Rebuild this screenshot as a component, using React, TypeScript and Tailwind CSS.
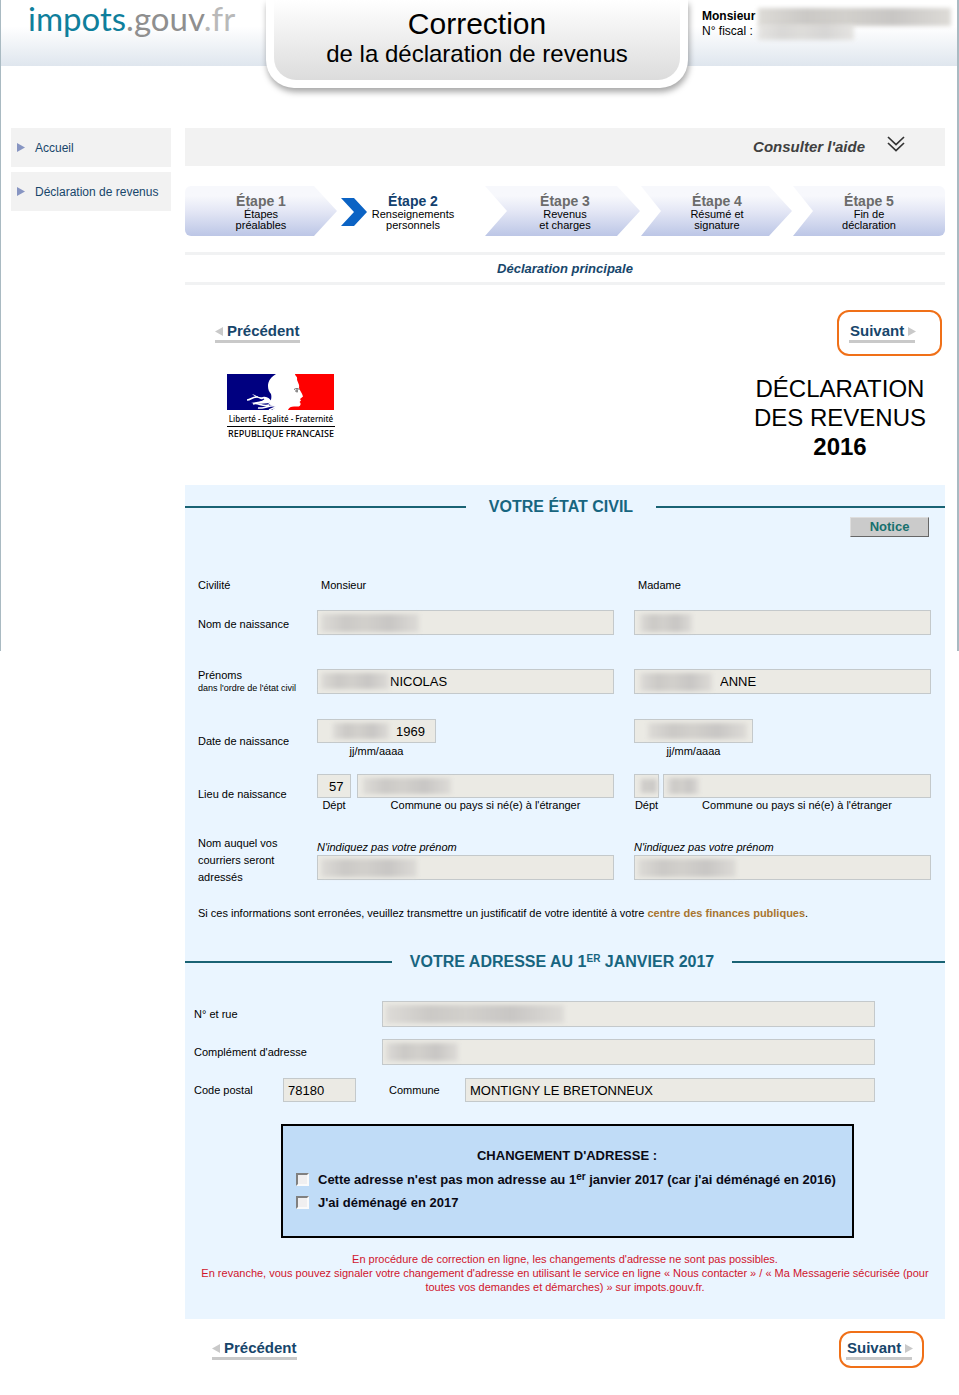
import React from "react";

type FieldProps = {
  label: string;
  id?: string;
  value?: string;
  className?: string;
  wrap?: string;
  smudge?: string;
};

const smudgeBase =
  "pointer-events-none absolute bg-[linear-gradient(90deg,#dddbd7,#cbc9c6_25%,#d2d0cc_45%,#c8c6c4_70%,#dddbd7)] blur-[2px]";

function Field({ label, id, value = "", className = "h-[25px]", wrap = "", smudge }: FieldProps) {
  return (
    <span className={`relative block ${wrap}`}>
      <input
        id={id}
        aria-label={label}
        readOnly
        value={value}
        className={`block w-full border border-[#c4c9cb] bg-[#ebeae4] px-1 text-[13px] text-black outline-none ${className}`}
      />
      {smudge && <span aria-hidden className={`${smudgeBase} ${smudge}`} />}
    </span>
  );
}

function Heading({ children, gap }: { children: React.ReactNode; gap: string }) {
  return (
    <div className={`flex h-5 items-center ${gap}`}>
      <span className="h-0.5 flex-[35] bg-[#1a6374]" />
      <h2 className="text-base leading-5 font-bold text-[#176580]">{children}</h2>
      <span className="h-0.5 flex-[36] bg-[#1a6374]" />
    </div>
  );
}

function Previous() {
  return (
    <a href="#precedent" className="flex h-5 items-center gap-1 border-b-3 border-[#c9c9c9] text-[15px] font-bold text-[#17466b]">
      <svg width="8" height="9" viewBox="0 0 8 9" aria-hidden>
        <path d="M8 0v9L0 4.5z" fill="#c9c9c9" />
      </svg>
      Précédent
    </a>
  );
}

function Next() {
  return (
    <a href="#suivant" className="flex h-5 items-center gap-1 border-b-3 border-[#c9c9c9] pl-px text-[15px] font-bold text-[#17466b]">
      Suivant
      <svg width="8" height="9" viewBox="0 0 8 9" className="shrink-0" aria-hidden>
        <path d="M0 0v9l8-4.5z" fill="#c9c9c9" />
      </svg>
    </a>
  );
}

const steps = [
  {
    n: 1,
    lines: ["Étapes", "préalables"],
    shape: "left-0 right-0 rounded-l-md [clip-path:polygon(0_0,calc(100%_-_23px)_0,100%_50%,calc(100%_-_23px)_100%,0_100%)]",
  },
  { n: 2, lines: ["Renseignements", "personnels"], shape: "" },
  {
    n: 3,
    lines: ["Revenus", "et charges"],
    shape: "-left-1 right-px [clip-path:polygon(0_0,calc(100%_-_23px)_0,100%_50%,calc(100%_-_23px)_100%,0_100%,22px_50%)]",
  },
  {
    n: 4,
    lines: ["Résumé et", "signature"],
    shape: "left-0 right-px [clip-path:polygon(0_0,calc(100%_-_23px)_0,100%_50%,calc(100%_-_23px)_100%,0_100%,20px_50%)]",
  },
  {
    n: 5,
    lines: ["Fin de", "déclaration"],
    shape: "left-0 right-0 rounded-r-md [clip-path:polygon(0_0,100%_0,100%_100%,0_100%,20px_50%)]",
  },
];

function Row({ label, className = "", labelClass = "", children }: { label: React.ReactNode; className?: string; labelClass?: string; children: React.ReactNode }) {
  return (
    <div className={`flex items-start pr-3.5 pl-[13px] ${className}`}>
      <div className={`w-[119px] shrink-0 leading-4 ${labelClass}`}>{label}</div>
      <div className="grid flex-1 grid-cols-2 gap-5">{children}</div>
    </div>
  );
}

function Marianne() {
  return (
    <div className="w-[108px] text-center font-['Noto_Sans',sans-serif] font-medium whitespace-nowrap text-black">
      <svg width="107" height="36" viewBox="0 0 107 36" className="block" role="img" aria-label="Drapeau tricolore et Marianne">
        <path d="M0 0H49C44 3 41 7 41 12C41 15 42 18 44 20C45 24 44 28 41 30L49 33L45 36H0Z" fill="#000080" />
        <path d="M68 0H107V36H61C62 33 65 32 69 32.500C72 33 74 32 73.500 29L72.500 28L74 26.500L73 25L76 22.500C75 19 73 17 72 14C73 10 70 8 70 5C71 3 68 2 68 0Z" fill="#ff0000" />
        <path d="M25 20C29 21 31 24 36 23C40 22 43 25 45 28C40 30 33 30 24 29C29 28 33 28 36 26C32 24 28 23 25 20Z" fill="#fff" />
        <path d="M20 26C24 26 26 22 31 23M26 30C31 28 35 33 42 31M31 34C36 35 42 31 50 32M42 36L50 32.500" stroke="#fff" strokeWidth="1.500" fill="none" />
        <path d="M28 26C31 27 34 27 37 25" stroke="#000080" strokeWidth="1.300" fill="none" />
        <path d="M67 15.500C69 14 71 14.500 72.500 15.500M68 17H71M70 15V18.500" stroke="#666" strokeWidth="1" fill="none" />
      </svg>
      <p className="mt-1 border-b border-black pb-0.5 text-[8px] leading-[10px]">Liberté - Egalité - Fraternité</p>
      <p className="mt-px text-[9px] leading-3">REPUBLIQUE FRANCAISE</p>
    </div>
  );
}

export default function App() {
  return (
    <div className="relative bg-white font-['Liberation_Sans',Arial,sans-serif] text-[11px] text-black">
      <div className="pointer-events-none absolute inset-x-0 top-0 h-[651px] border-r-2 border-l border-[#a9bac2]" />

      <header className="grid h-[66px] grid-cols-[minmax(0,266fr)_422px_minmax(0,271fr)] items-start bg-gradient-to-b from-white from-40% to-[#dfe6ee]">
        <a href="#accueil" className="pl-7 font-['Lato',sans-serif] text-[33px] leading-9 text-[#8f8f8f]">
          <span className="text-[#0f7f9c]">impots</span>.gouv<span className="text-[#b9b9b9]">.fr</span>
        </a>
        <div className="relative h-[88px] rounded-b-[28px] bg-white px-2 pb-2 shadow-[1px_4px_6px_rgba(0,0,0,0.35)]">
          <h1 className="h-20 rounded-b-[22px] bg-gradient-to-b from-white to-[#dcdcdc] pt-[9px] text-center text-2xl leading-[30px]">
            <span className="block text-[30px]">Correction</span>
            de la déclaration de revenus
          </h1>
        </div>
        <div className="relative pt-[9px] pl-3.5 text-xs leading-[15px]">
          <p className="font-bold">Monsieur</p>
          <p>N° fiscal :</p>
          <span aria-hidden className={`${smudgeBase} top-2 right-2 left-[70px] h-[18px]`} />
          <span aria-hidden className={`${smudgeBase} top-6 left-[70px] h-4 w-24 opacity-70`} />
        </div>
      </header>

      <div className="flex items-start gap-3.5 pt-[62px] pr-3.5 pl-[11px]">
        <nav className="flex w-40 shrink-0 flex-col gap-[5px] text-xs text-[#17466b]">
          {["Accueil", "Déclaration de revenus"].map((t) => (
            <a key={t} href="#menu" className="flex h-[39px] items-center gap-2.5 bg-[#f2f2f2] pl-1.5 whitespace-nowrap">
              <svg width="8" height="9" viewBox="0 0 8 9" aria-hidden>
                <path d="M0 0v9l8-4.5z" fill="#8795c2" />
              </svg>
              {t}
            </a>
          ))}
        </nav>

        <main className="min-w-0 flex-1">
          <button type="button" className="flex h-[38px] w-full items-center justify-end gap-[22px] bg-[#f2f2f2] pr-10 text-[15px] font-bold text-[#404040] italic">
            Consulter l'aide
            <svg width="18" height="16" viewBox="0 0 18 16" fill="none" stroke="#333" strokeWidth="1.700" className="mb-1.5" aria-hidden>
              <path d="M1 1l8 7.500 8-7.500M1 7l8 7.500 8-7.500" />
            </svg>
          </button>

          <ol className="mt-5 grid h-[50px] grid-cols-5 text-center">
            {steps.map((s) => (
              <li key={s.n} className="relative pt-[7px]">
                {s.shape ? (
                  <span aria-hidden className={`absolute inset-y-0 bg-gradient-to-b from-[#f7f8fc] from-20% via-[#e4e7f5] to-[#bcc6e6] ${s.shape}`} />
                ) : (
                  <svg width="26" height="28" viewBox="0 0 26 28" className="absolute top-3 left-1" aria-hidden>
                    <path d="M0 0h13l13 14-13 14H0l13-14z" fill="#0b63c4" />
                  </svg>
                )}
                <span className={`relative block text-sm leading-4 font-bold ${s.n === 2 ? "text-[#12406e]" : "text-[#6b6b6b]"}`}>Étape {s.n}</span>
                <span className="relative block leading-[11px]">
                  {s.lines[0]}
                  <br />
                  {s.lines[1]}
                </span>
              </li>
            ))}
          </ol>

          <p className="mt-4 flex h-[33px] items-center justify-center border-y-3 border-[#f1f2f3] text-[13px] font-bold text-[#17466b] italic">
            Déclaration principale
          </p>

          <div className="mt-[25px] flex items-start justify-between pr-[3px] pl-[30px]">
            <div className="pt-[13px]">
              <Previous />
            </div>
            <div className="h-[46px] w-[105px] rounded-xl border-2 border-[#f07018] pt-[11px] pl-2.5">
              <div className="w-[66px]">
                <Next />
              </div>
            </div>
          </div>

          <div className="mt-[18px] flex items-start justify-between pr-[19px] pl-[42px]">
            <Marianne />
            <p className="text-center text-2xl leading-[29px]">
              DÉCLARATION
              <br />
              DES REVENUS
              <br />
              <strong>2016</strong>
            </p>
          </div>

          <form className="mt-6 flow-root bg-[#eaf5ff] pt-3 pb-[25px]">
            <Heading gap="gap-[23px]">VOTRE ÉTAT CIVIL</Heading>
            <div className="flex justify-end pr-4">
              <button
                type="button"
                className="h-5 w-[79px] border border-t-[#dedede] border-r-[#666] border-b-[#666] border-l-[#dedede] bg-[#cbcbcb] text-[13px] leading-4 font-bold text-[#17706e]"
              >
                Notice
              </button>
            </div>

            <Row label="Civilité" className="mt-10">
              <p className="pl-1 leading-4">Monsieur</p>
              <p className="pl-1 leading-4">Madame</p>
            </Row>

            <Row label={<label htmlFor="nom1">Nom de naissance</label>} labelClass="pt-1.5" className="mt-[17px]">
              <Field id="nom1" label="Nom de naissance de Monsieur" smudge="top-1 left-1 h-[18px] w-[98px]" />
              <Field label="Nom de naissance de Madame" smudge="top-1 left-1.5 h-[18px] w-[52px]" />
            </Row>

            <Row
              label={
                <label htmlFor="prenoms1" className="block leading-[13px] whitespace-nowrap">
                  Prénoms
                  <span className="block text-[9px]">dans l'ordre de l'état civil</span>
                </label>
              }
              className="mt-[34px]"
            >
              <Field id="prenoms1" label="Prénoms de Monsieur" value="NICOLAS" className="h-[25px] pl-[72px]" smudge="top-1 left-1 h-4 w-[68px]" />
              <Field label="Prénoms de Madame" value="ANNE" className="h-[25px] pl-[85px]" smudge="top-1 left-1.5 h-[18px] w-[72px]" />
            </Row>

            <Row label={<label htmlFor="date1">Date de naissance</label>} labelClass="pt-3.5" className="mt-6">
              <div className="w-[119px] text-center leading-4">
                <Field id="date1" label="Date de naissance de Monsieur" value="1969" className="h-6 pl-[78px]" smudge="top-1 left-4 h-4 w-14" />
                jj/mm/aaaa
              </div>
              <div className="w-[119px] text-center leading-4">
                <Field label="Date de naissance de Madame" className="h-6" smudge="top-1 left-3.5 h-4 w-[99px]" />
                jj/mm/aaaa
              </div>
            </Row>

            <Row label={<label htmlFor="dept1">Lieu de naissance</label>} labelClass="pt-3" className="mt-[15px]">
              <div className="flex gap-1.5 text-center leading-[15px]">
                <div className="w-[34px]">
                  <Field id="dept1" label="Département de naissance de Monsieur" value="57" className="h-6 pl-[11px]" />
                  Dépt
                </div>
                <div className="flex-1">
                  <Field label="Commune de naissance de Monsieur" className="h-6" smudge="top-1 left-1.5 h-4 w-[88px]" />
                  Commune ou pays si né(e) à l'étranger
                </div>
              </div>
              <div className="flex gap-1 text-center leading-[15px]">
                <div className="w-[25px]">
                  <Field label="Département de naissance de Madame" className="h-6" smudge="top-[5px] left-1.5 h-3.5 w-[18px]" />
                  Dépt
                </div>
                <div className="flex-1">
                  <Field label="Commune de naissance de Madame" className="h-6" smudge="top-1 left-1 h-4 w-8" />
                  Commune ou pays si né(e) à l'étranger
                </div>
              </div>
            </Row>

            <Row
              label={
                <label htmlFor="courrier1" className="block w-24 leading-[17px]">
                  Nom auquel vos courriers seront adressés
                </label>
              }
              className="mt-[22px]"
            >
              <div className="pt-1 leading-4">
                <em>N'indiquez pas votre prénom</em>
                <Field id="courrier1" label="Nom pour les courriers de Monsieur" smudge="top-1 left-1 h-[18px] w-24" />
              </div>
              <div className="pt-1 leading-4">
                <em>N'indiquez pas votre prénom</em>
                <Field label="Nom pour les courriers de Madame" smudge="top-1 left-1 h-[18px] w-[98px]" />
              </div>
            </Row>

            <p className="mt-[19px] mb-[31px] pl-[13px] leading-4">
              Si ces informations sont erronées, veuillez transmettre un justificatif de votre identité à votre{" "}
              <a href="#centre" className="font-bold text-[#a8752f]">
                centre des finances publiques
              </a>
              .
            </p>

            <Heading gap="gap-[18px]">
              VOTRE ADRESSE AU 1<sup className="top-0 align-[5px] text-[10px] leading-none">ER</sup> JANVIER 2017
            </Heading>

            <div className="mt-[29px] pr-[70px] pl-[9px]">
              <div className="flex items-center">
                <label htmlFor="rue" className="w-[188px]">N° et rue</label>
                <Field id="rue" label="N° et rue" wrap="flex-1" className="h-[26px]" smudge="top-1 left-1 h-[18px] w-[178px]" />
              </div>
              <div className="mt-3 flex items-center">
                <label htmlFor="complement" className="w-[188px]">Complément d'adresse</label>
                <Field id="complement" label="Complément d'adresse" wrap="flex-1" className="h-[26px]" smudge="top-1 left-1 h-[18px] w-[72px]" />
              </div>
              <div className="mt-[13px] flex items-center">
                <label htmlFor="cp" className="w-[89px]">Code postal</label>
                <Field id="cp" label="Code postal" value="78180" wrap="w-[73px]" className="h-6" />
                <label htmlFor="commune" className="ml-[33px] w-19">Commune</label>
                <Field id="commune" label="Commune" value="MONTIGNY LE BRETONNEUX" wrap="flex-1" className="h-6" />
              </div>
            </div>

            <fieldset className="mt-[22px] mr-[91px] ml-24 h-[114px] border-2 border-black bg-[#c0dcf7] pt-5 pl-[13px] text-[13px] font-bold text-[#0a0a14]">
              <p className="pr-3.5 text-center leading-5">CHANGEMENT D'ADRESSE :</p>
              <div className="mt-0.5">
                <label className="flex h-[23px] items-center gap-[9px] whitespace-nowrap">
                  <input type="checkbox" className="size-[13px] shrink-0 appearance-none border-2 border-t-[#808080] border-r-[#fafafa] border-b-[#fafafa] border-l-[#808080] bg-[#f0eff0] checked:bg-[#17466b]" />
                  <span>
                    Cette adresse n'est pas mon adresse au 1<sup className="top-0 align-[4px] text-[10px] leading-none">er</sup> janvier 2017 (car j'ai déménagé en 2016)
                  </span>
                </label>
                <label className="flex h-[23px] items-center gap-[9px] whitespace-nowrap">
                  <input type="checkbox" className="size-[13px] shrink-0 appearance-none border-2 border-t-[#808080] border-r-[#fafafa] border-b-[#fafafa] border-l-[#808080] bg-[#f0eff0] checked:bg-[#17466b]" />
                  <span>J'ai déménagé en 2017</span>
                </label>
              </div>
            </fieldset>

            <p className="mt-3.5 pr-3.5 pl-3.5 text-center leading-3.5 text-[#d0142c]">
              En procédure de correction en ligne, les changements d'adresse ne sont pas possibles.
              <br />
              En revanche, vous pouvez signaler votre changement d'adresse en utilisant le service en ligne « Nous contacter » / « Ma Messagerie sécurisée (pour
              <br />
              toutes vos demandes et démarches) » sur impots.gouv.fr.
            </p>
          </form>

          <div className="mt-3 mb-[27px] flex items-start justify-between pr-[21px] pl-[27px]">
            <div className="pt-[9px]">
              <Previous />
            </div>
            <div className="h-[37px] w-[85px] rounded-xl border-2 border-[#f07018] pt-[7px] pl-[5px]">
              <div className="w-[66px]">
                <Next />
              </div>
            </div>
          </div>
        </main>
      </div>
    </div>
  );
}
